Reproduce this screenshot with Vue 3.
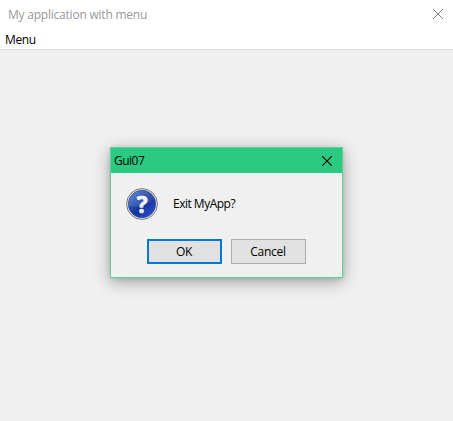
<script setup>
import { ref } from 'vue'

const title = ref('My application with menu')
const dialogTitle = ref('Gui07')
</script>

<template>
  <div class="window">
    <header class="titlebar">
      <span class="title">{{ title }}</span>
      <svg class="close" width="10" height="10" viewBox="0 0 10 10" aria-label="Close">
        <path d="M0 0 10 10M10 0 0 10" />
      </svg>
    </header>
    <nav class="menubar"><span class="menu-item">Menu</span></nav>
    <main class="client">
      <section class="dialog" role="dialog">
        <div class="dialog-bar">
          <span class="dialog-title">{{ dialogTitle }}</span>
          <svg class="close dark" width="10" height="10" viewBox="0 0 10 10" aria-label="Close">
            <path d="M0 0 10 10M10 0 0 10" />
          </svg>
        </div>
        <div class="message">
          <svg width="32" height="32" viewBox="0 0 32 32">
            <defs>
              <linearGradient id="ball" x1="0" y1="0" x2="1" y2="1">
                <stop offset="0" stop-color="#5f86d2" />
                <stop offset=".28" stop-color="#2c56b4" />
                <stop offset=".55" stop-color="#17339a" />
                <stop offset="1" stop-color="#2f58dc" />
              </linearGradient>
              <linearGradient id="mark" x1="0" y1="0" x2="0" y2="1">
                <stop offset="0" stop-color="#ffffff" />
                <stop offset="1" stop-color="#d9dde6" />
              </linearGradient>
            </defs>
            <circle cx="16" cy="16" r="15.4" fill="#ececec" stroke="#777" stroke-width="1" />
            <circle cx="16" cy="16" r="13.7" fill="url(#ball)" stroke="#26419a" stroke-width=".7" />
            <path d="M2.8 18C10 19.5 21 17 28.4 10.5A13.5 13.5 0 0 0 2.8 18Z" fill="#fff" opacity=".12" />
            <text class="mark" x="16.2" y="24.7" text-anchor="middle" fill="url(#mark)">?</text>
          </svg>
          <span class="question">Exit MyApp?</span>
        </div>
        <div class="actions">
          <button class="btn primary"><span class="label">OK</span></button>
          <button class="btn"><span class="label">Cancel</span></button>
        </div>
      </section>
    </main>
  </div>
</template>

<style>
body {
  margin: 0;
  overflow: hidden;
}
</style>

<style scoped>
* {
  box-sizing: border-box;
}
.window {
  display: flex;
  flex-direction: column;
  width: 453px;
  height: 421px;
  background: #fff;
  color: #000;
  font: 12px/16px "Open Sans", "Noto Sans", sans-serif;
  white-space: nowrap;
}
.titlebar {
  display: flex;
  justify-content: space-between;
  height: 31px;
  padding: 7px 10px 0 8px;
  color: #999;
}
.title {
  letter-spacing: -0.22px;
}
.close {
  display: block;
  margin-top: 2px;
  fill: none;
  stroke: #858585;
  stroke-width: 1;
}
.close.dark {
  margin-top: 0;
  stroke: #000;
  stroke-width: 1.1;
}
.menubar {
  height: 19px;
  padding: 1px 5px 0;
  border-bottom: 1px solid #d9d9d9;
}
.menu-item {
  letter-spacing: -0.4px;
}
.client {
  flex: 1;
  padding: 97px 0 0 110px;
  background: #f0f0f0;
}
.dialog {
  width: 233px;
  height: 131px;
  background: #f0f0f0;
  border: 1px solid #5bd299;
  box-shadow: 0 4px 16px rgba(0, 0, 0, 0.32), 0 1px 5px rgba(0, 0, 0, 0.12);
}
.dialog-bar {
  display: flex;
  align-items: center;
  justify-content: space-between;
  height: 25px;
  padding: 0 10px 0 3px;
  background: #2acb80;
}
.dialog-title {
  letter-spacing: -0.5px;
}
.message {
  display: flex;
  align-items: center;
  gap: 15px;
  padding: 15px 0 0 15px;
}
.message svg {
  display: block;
  overflow: visible;
}
.message .mark {
  font: bold 23px "Open Sans", sans-serif;
  stroke: #fff;
  stroke-width: 0.6;
}
.question {
  letter-spacing: -0.5px;
}
.actions {
  display: flex;
  gap: 9px;
  padding: 19px 0 0 36px;
}
.btn {
  width: 75px;
  height: 25px;
  padding: 0;
  border: 1px solid #adadad;
  border-radius: 0;
  background: #e1e1e1;
  color: #000;
  font: inherit;
}
.primary {
  border: 2px solid #0078d7;
}
.label {
  margin-right: 1px;
  letter-spacing: -0.3px;
}
</style>
